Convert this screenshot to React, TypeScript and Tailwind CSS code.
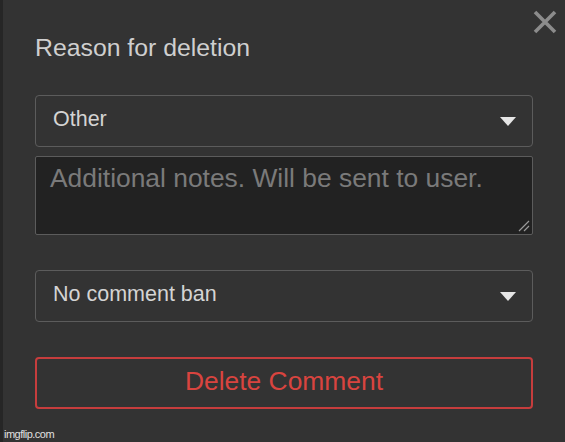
import React from "react";

function Caret() {
  return (
    <svg width="16" height="9" viewBox="0 0 16 9" className="shrink-0">
      <path d="M0 0 H16 L8 9 Z" fill="#e6e6e6" />
    </svg>
  );
}

function SelectBox({ label }: { label: string }) {
  return (
    <div className="h-[52px] w-[498px] border border-[#5c5c5c] rounded-[4px] flex items-center justify-between pl-[17px] pr-[16px]">
      <span className="text-[21.5px] leading-none text-[#d4d4d4] -mt-[2px]">{label}</span>
      <Caret />
    </div>
  );
}

export default function App() {
  return (
    <div
      className="relative w-[565px] h-[442px] bg-[#333333] border-l-[3px] border-[#262626] overflow-hidden"
      style={{ fontFamily: '"Liberation Sans", Arial, sans-serif' }}
    >
      <svg
        width="24"
        height="24"
        viewBox="0 0 24 24"
        className="absolute left-[530px] top-[10px]"
      >
        <path d="M2 2 L22 22 M22 2 L2 22" stroke="#8c8c8c" strokeWidth="3.6" strokeLinecap="butt" />
      </svg>

      <div className="flex flex-col pl-[32px]">
        <div className="mt-[33px] text-[24.8px] leading-[30px] text-[#cfcfcf]">Reason for deletion</div>

        <div className="mt-[32px]">
          <SelectBox label="Other" />
        </div>

        <div className="relative mt-[9px] h-[79px] w-[498px] bg-[#222222] border border-[#5c5c5c] rounded-[2px] pl-[14px] pt-[6px]">
          <span className="text-[26.4px] leading-[30px] text-[#7a7a7a]">Additional notes. Will be sent to user.</span>
          <svg width="12" height="12" viewBox="0 0 12 12" className="absolute right-[2px] bottom-[2px]">
            <path d="M1 11 L11 1 M6 11 L11 6" stroke="#9a9a9a" strokeWidth="1.2" />
          </svg>
        </div>

        <div className="mt-[35px]">
          <SelectBox label="No comment ban" />
        </div>

        <div className="mt-[35px] h-[52px] w-[498px] border-2 border-[#c63d3d] rounded-[4px] flex items-center justify-center">
          <span className="text-[26.4px] leading-none text-[#d9443f] -mt-[3px]">Delete Comment</span>
        </div>
      </div>

      <div className="absolute left-[1px] bottom-[2px] text-[11px] leading-none text-[#e0e0e0] tracking-[-0.5px]">
        imgflip.com
      </div>
    </div>
  );
}
